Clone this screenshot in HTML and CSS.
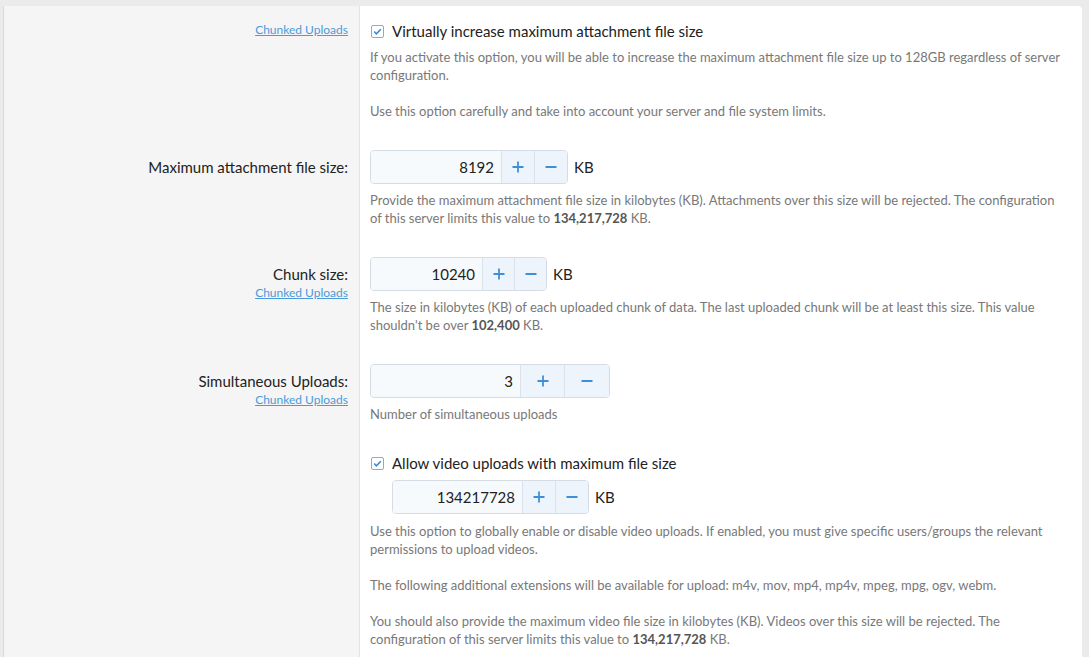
FILE: index.html
```html
<!DOCTYPE html>
<html>
<head>
<meta charset="utf-8">
<link rel="stylesheet" href="styles.css">
</head>
<body>
<div class="panel">
  <div class="row">
    <div class="lbl"><a class="doc" href="#">Chunked Uploads</a></div>
    <div class="ctl">
      <label class="chk"><span class="box"><svg width="13" height="13" viewBox="0 0 13 13"><rect x="0.5" y="0.5" width="12" height="12" rx="1.5" fill="#fff" stroke="#7ab0e0"/><path d="M3.2 6.5 L5.4 8.8 L9.8 4.2" fill="none" stroke="#3c8ad6" stroke-width="1.6"/></svg></span>Virtually increase maximum attachment file size</label>
      <p class="help">If you activate this option, you will be able to increase the maximum attachment file size up to 128GB regardless of server configuration.</p>
      <p class="help gap">Use this option carefully and take into account your server and file system limits.</p>
    </div>
  </div>

  <div class="row">
    <div class="lbl"><span class="name">Maximum attachment file size:</span></div>
    <div class="ctl">
      <div class="line">
        <div class="spin s1">
          <input class="field" type="text" value="8192">
          <span class="btn"><svg width="14" height="14" viewBox="0 0 14 14"><path d="M7 1.5V12.5M1.5 7H12.5" stroke="#3d8fd9" stroke-width="1.8"/></svg></span>
          <span class="btn"><svg width="14" height="14" viewBox="0 0 14 14"><path d="M1.5 7H12.5" stroke="#3d8fd9" stroke-width="1.8"/></svg></span>
        </div>
        <span class="unit">KB</span>
      </div>
      <p class="help">Provide the maximum attachment file size in kilobytes (KB). Attachments over this size will be rejected. The configuration of this server limits this value to <b>134,217,728</b> KB.</p>
    </div>
  </div>

  <div class="row">
    <div class="lbl"><span class="name">Chunk size:</span><a class="doc" href="#">Chunked Uploads</a></div>
    <div class="ctl">
      <div class="line">
        <div class="spin s2">
          <input class="field" type="text" value="10240">
          <span class="btn"><svg width="14" height="14" viewBox="0 0 14 14"><path d="M7 1.5V12.5M1.5 7H12.5" stroke="#3d8fd9" stroke-width="1.8"/></svg></span>
          <span class="btn"><svg width="14" height="14" viewBox="0 0 14 14"><path d="M1.5 7H12.5" stroke="#3d8fd9" stroke-width="1.8"/></svg></span>
        </div>
        <span class="unit">KB</span>
      </div>
      <p class="help">The size in kilobytes (KB) of each uploaded chunk of data. The last uploaded chunk will be at least this size. This value shouldn't be over <b>102,400</b> KB.</p>
    </div>
  </div>

  <div class="row">
    <div class="lbl"><span class="name">Simultaneous Uploads:</span><a class="doc" href="#">Chunked Uploads</a></div>
    <div class="ctl">
      <div class="line">
        <div class="spin s3">
          <input class="field" type="text" value="3">
          <span class="btn"><svg width="14" height="14" viewBox="0 0 14 14"><path d="M7 1.5V12.5M1.5 7H12.5" stroke="#3d8fd9" stroke-width="1.8"/></svg></span>
          <span class="btn"><svg width="14" height="14" viewBox="0 0 14 14"><path d="M1.5 7H12.5" stroke="#3d8fd9" stroke-width="1.8"/></svg></span>
        </div>
      </div>
      <p class="help">Number of simultaneous uploads</p>
    </div>
  </div>

  <div class="row">
    <div class="lbl"></div>
    <div class="ctl">
      <label class="chk"><span class="box"><svg width="13" height="13" viewBox="0 0 13 13"><rect x="0.5" y="0.5" width="12" height="12" rx="1.5" fill="#fff" stroke="#7ab0e0"/><path d="M3.2 6.5 L5.4 8.8 L9.8 4.2" fill="none" stroke="#3c8ad6" stroke-width="1.6"/></svg></span>Allow video uploads with maximum file size</label>
      <div class="line indent">
        <div class="spin s4">
          <input class="field" type="text" value="134217728">
          <span class="btn"><svg width="14" height="14" viewBox="0 0 14 14"><path d="M7 1.5V12.5M1.5 7H12.5" stroke="#3d8fd9" stroke-width="1.8"/></svg></span>
          <span class="btn"><svg width="14" height="14" viewBox="0 0 14 14"><path d="M1.5 7H12.5" stroke="#3d8fd9" stroke-width="1.8"/></svg></span>
        </div>
        <span class="unit">KB</span>
      </div>
      <p class="help">Use this option to globally enable or disable video uploads. If enabled, you must give specific users/groups the relevant permissions to upload videos.</p>
      <p class="help gap">The following additional extensions will be available for upload: m4v, mov, mp4, mp4v, mpeg, mpg, ogv, webm.</p>
      <p class="help gap">You should also provide the maximum video file size in kilobytes (KB). Videos over this size will be rejected. The configuration of this server limits this value to <b>134,217,728</b> KB.</p>
    </div>
  </div>
</div>
</body>
</html>
```

FILE: styles.css
```css
* { box-sizing: border-box; }
html, body { margin: 0; padding: 0; }
body {
  background: #ebebeb;
  font-family: "Lato", "Open Sans", sans-serif;
  color: #222;
  height: 657px;
  overflow: hidden;
}
.panel {
  margin: 6px 7px 0 3px;
  border-left: 1px solid #d9d9d9;
  border-top-right-radius: 4px;
  overflow: hidden;
}
.row {
  display: grid;
  grid-template-columns: 355px 1fr;
}
.lbl {
  background: #f5f5f5;
  padding: 15px 11px 15px 0;
  text-align: right;
}
.ctl {
  background: #fff;
  border-left: 1px solid #e4e4e4;
  padding: 15px 15px 15px 10px;
}
.name {
  display: block;
  padding-top: 7px;
  line-height: 20px;
  font-size: 15px;
  color: #222;
}
.doc {
  display: block;
  font-size: 12px;
  line-height: 18px;
  color: #4b9ad9;
  text-decoration: underline;
}
.chk {
  display: flex;
  align-items: center;
  height: 20px;
  font-size: 15px;
  color: #222;
}
.box {
  display: inline-flex;
  width: 22px;
  padding-left: 1px;
}
.help {
  margin: 7px 0 0 0;
  font-size: 13px;
  line-height: 18px;
  color: #787878;
}
.help.gap { margin-top: 18px; }
.help b { color: #555; font-weight: 700; }
.line {
  display: flex;
  align-items: center;
}
.line.indent { margin: 7px 0 0 22px; }
.line + .help { margin-top: 7px; }
.indent + .help { margin-top: 8px; }
.spin {
  display: flex;
  height: 34px;
  border: 1px solid #d6dce3;
  border-radius: 4px;
  overflow: hidden;
  background: #f6f9fd;
}
.field {
  border: 0;
  margin: 0;
  background: #f7fafd;
  font-family: inherit;
  font-size: 15px;
  color: #222;
  text-align: right;
  padding: 0 7px 0 4px;
  outline: none;
  height: 32px;
}
.btn {
  display: flex;
  align-items: center;
  justify-content: center;
  background: #eef4fb;
  border-left: 1px solid #dbe2ea;
  width: 33px;
}
.s1 .field { width: 130px; }
.s2 .field { width: 111px; }
.s2 .btn { width: 32px; }
.s3 .field { width: 149px; }
.s3 .btn { width: 44px; }
.s3 .btn + .btn { width: 45px; }
.s4 .field { width: 129px; }
.unit {
  margin-left: 6px;
  font-size: 15px;
  color: #222;
}
```
